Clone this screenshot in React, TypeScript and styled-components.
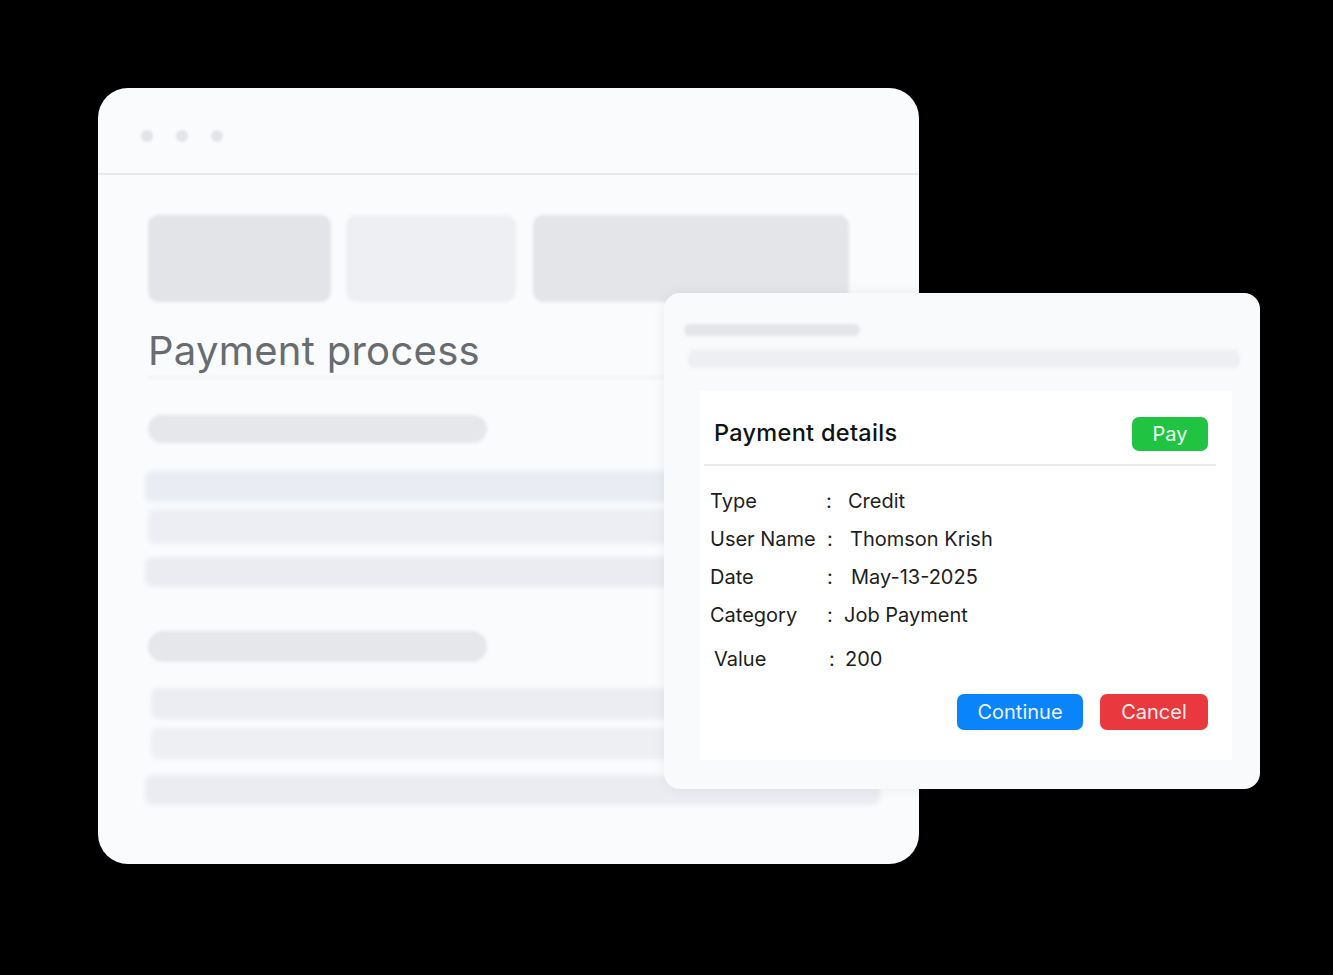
import React from "react";
import styled, { createGlobalStyle } from "styled-components";

const Global = createGlobalStyle`
  html, body { margin: 0; padding: 0; background: #000; }
  body { font-family: Inter, "Noto Sans", "Liberation Sans", sans-serif; }
`;

const Stage = styled.div`
  position: relative;
  width: 1333px;
  height: 975px;
  background: #000;
  overflow: hidden;
  padding: 88px 0 0 98px;
  box-sizing: border-box;
`;

const Window = styled.div`
  width: 821px;
  height: 776px;
  border-radius: 30px;
  background: #fafbfd;
  overflow: hidden;
  display: flex;
  flex-direction: column;
`;

const TitleBar = styled.div`
  height: 87px;
  flex: none;
  border-bottom: 2px solid #e8eaee;
  display: flex;
  align-items: flex-start;
  gap: 23px;
  padding: 42px 0 0 43px;
  box-sizing: border-box;
`;

const Dot = styled.span`
  width: 12px;
  height: 12px;
  border-radius: 50%;
  background: #e3e4e8;
  filter: blur(1.2px);
`;

const Body = styled.div`
  padding: 40px 0 0 50px;
  display: flex;
  flex-direction: column;
`;

const BlockRow = styled.div`
  display: flex;
  gap: 15px;
`;

const Block = styled.div<{ $w: number; $tone: string; $ml?: number }>`
  width: ${(p) => p.$w}px;
  height: 87px;
  margin-left: ${(p) => p.$ml ?? 0}px;
  border-radius: 10px;
  background: ${(p) => p.$tone};
  filter: blur(1.5px);
`;

const PageTitle = styled.h1`
  margin: 24px 0 0 0;
  font-family: Inter, "Noto Sans", sans-serif;
  font-weight: 400;
  font-size: 40px;
  line-height: 50px;
  letter-spacing: 0.3px;
  color: #686c70;
`;

const TitleRule = styled.div`
  width: 520px;
  height: 3px;
  margin-top: 0;
  background: #f2f3f6;
  filter: blur(1px);
`;

const Pill = styled.div<{ $mt: number; $h: number }>`
  width: 339px;
  height: ${(p) => p.$h}px;
  margin-top: ${(p) => p.$mt}px;
  border-radius: 15px;
  background: #e6e7ea;
  filter: blur(1.5px);
`;

const Row = styled.div<{ $mt: number; $h: number; $w: number; $tone: string; $ml?: number }>`
  width: ${(p) => p.$w}px;
  height: ${(p) => p.$h}px;
  margin-top: ${(p) => p.$mt}px;
  margin-left: ${(p) => p.$ml ?? 0}px;
  border-radius: 8px;
  background: ${(p) => p.$tone};
  filter: blur(2px);
`;

const Dialog = styled.div`
  position: absolute;
  left: 664px;
  top: 293px;
  width: 596px;
  height: 496px;
  border-radius: 16px;
  background: #f9fafc;
  box-shadow: 0 0 14px rgba(0, 0, 0, 0.06);
  box-sizing: border-box;
  padding: 31px 20px 0 20px;
  display: flex;
  flex-direction: column;
`;

const SkelBar = styled.div<{ $w: number; $h: number; $ml: number; $mt: number; $tone: string }>`
  width: ${(p) => p.$w}px;
  height: ${(p) => p.$h}px;
  margin-left: ${(p) => p.$ml}px;
  margin-top: ${(p) => p.$mt}px;
  border-radius: 6px;
  background: ${(p) => p.$tone};
  filter: blur(1.5px);
`;

const Card = styled.div`
  margin: 23px 0 0 16px;
  width: 532px;
  height: 369px;
  background: #fff;
  box-sizing: border-box;
  padding: 0 0 0 4px;
  display: flex;
  flex-direction: column;
`;

const CardHeader = styled.div`
  height: 75px;
  border-bottom: 2px solid #e9eaed;
  margin-right: 16px;
  display: flex;
  align-items: center;
  justify-content: space-between;
  padding: 9px 8px 0 10px;
  box-sizing: border-box;
`;

const CardTitle = styled.h2`
  margin: 0;
  font-size: 23.5px;
  font-weight: 500;
  color: #111214;
  letter-spacing: 0.3px;
`;

const Btn = styled.button<{ $bg: string; $w: number; $h: number; $fg: string }>`
  width: ${(p) => p.$w}px;
  height: ${(p) => p.$h}px;
  border: none;
  border-radius: 7px;
  background: ${(p) => p.$bg};
  color: ${(p) => p.$fg};
  font-family: Inter, "Noto Sans", sans-serif;
  font-size: 20px;
  font-weight: 400;
  padding: 0;
  display: flex;
  align-items: center;
  justify-content: center;
  cursor: pointer;
`;

const PayBtn = styled(Btn)`
  margin-top: 4px;
`;

const Details = styled.div`
  padding: 16px 0 0 6px;
  display: flex;
  flex-direction: column;
`;

const DetailRow = styled.div<{ $mt?: number }>`
  display: grid;
  grid-template-columns: 116px 22px auto;
  height: 38px;
  align-items: center;
  margin-top: ${(p) => p.$mt ?? 0}px;
  font-size: 20px;
  color: #1d1e20;
`;

const Label = styled.span<{ $dx?: number }>`
  margin-left: ${(p) => p.$dx ?? 0}px;
`;

const Colon = styled.span<{ $dx?: number }>`
  margin-left: ${(p) => p.$dx ?? 0}px;
`;

const Value = styled.span<{ $dx?: number }>`
  margin-left: ${(p) => p.$dx ?? 0}px;
`;

const Actions = styled.div`
  display: flex;
  justify-content: flex-end;
  gap: 17px;
  margin: 16px 24px 0 0;
`;

const rows = [
  { label: "Type", value: "Credit", l: 0, c: 0, v: 0 },
  { label: "User Name", value: "Thomson Krish", l: 0, c: 1, v: 2 },
  { label: "Date", value: "May-13-2025", l: 0, c: 1, v: 3 },
  { label: "Category", value: "Job Payment", l: 0, c: 1, v: -4 },
];

export default function App() {
  return (
    <>
      <Global />
      <Stage>
        <Window>
          <TitleBar>
            <Dot />
            <Dot />
            <Dot />
          </TitleBar>
          <Body>
            <BlockRow>
              <Block $w={183} $tone="#e3e4e7" />
              <Block $w={170} $tone="#eeeff2" />
              <Block $w={316} $tone="#e4e5e8" $ml={2} />
            </BlockRow>
            <PageTitle>Payment process</PageTitle>
            <TitleRule />
            <Pill $mt={36} $h={28} />
            <Row $mt={28} $h={31} $w={540} $tone="#e9ecf3" $ml={-3} />
            <Row $mt={7} $h={35} $w={540} $tone="#edeef3" />
            <Row $mt={13} $h={30} $w={540} $tone="#ebecf1" $ml={-3} />
            <Pill $mt={44} $h={31} />
            <Row $mt={26} $h={31} $w={540} $tone="#ebedf3" $ml={3} />
            <Row $mt={9} $h={31} $w={540} $tone="#eeeff3" $ml={3} />
            <Row $mt={16} $h={30} $w={735} $tone="#ebecf1" $ml={-3} />
          </Body>
        </Window>
        <Dialog>
          <SkelBar $w={176} $h={12} $ml={0} $mt={0} $tone="#e4e5e8" />
          <SkelBar $w={552} $h={18} $ml={4} $mt={14} $tone="#eeeff2" />
          <Card>
            <CardHeader>
              <CardTitle>Payment details</CardTitle>
              <PayBtn $bg="#21c442" $fg="#ecfff0" $w={76} $h={34}>
                Pay
              </PayBtn>
            </CardHeader>
            <Details>
              {rows.map((r) => (
                <DetailRow key={r.label}>
                  <Label $dx={r.l}>{r.label}</Label>
                  <Colon $dx={r.c}>:</Colon>
                  <Value $dx={r.v}>{r.value}</Value>
                </DetailRow>
              ))}
              <DetailRow $mt={6}>
                <Label $dx={4}>Value</Label>
                <Colon $dx={3}>:</Colon>
                <Value $dx={-3}>200</Value>
              </DetailRow>
            </Details>
            <Actions>
              <Btn $bg="#0a84fb" $fg="#eef6ff" $w={126} $h={36}>
                Continue
              </Btn>
              <Btn $bg="#e9383e" $fg="#ffeeee" $w={108} $h={36}>
                Cancel
              </Btn>
            </Actions>
          </Card>
        </Dialog>
      </Stage>
    </>
  );
}
